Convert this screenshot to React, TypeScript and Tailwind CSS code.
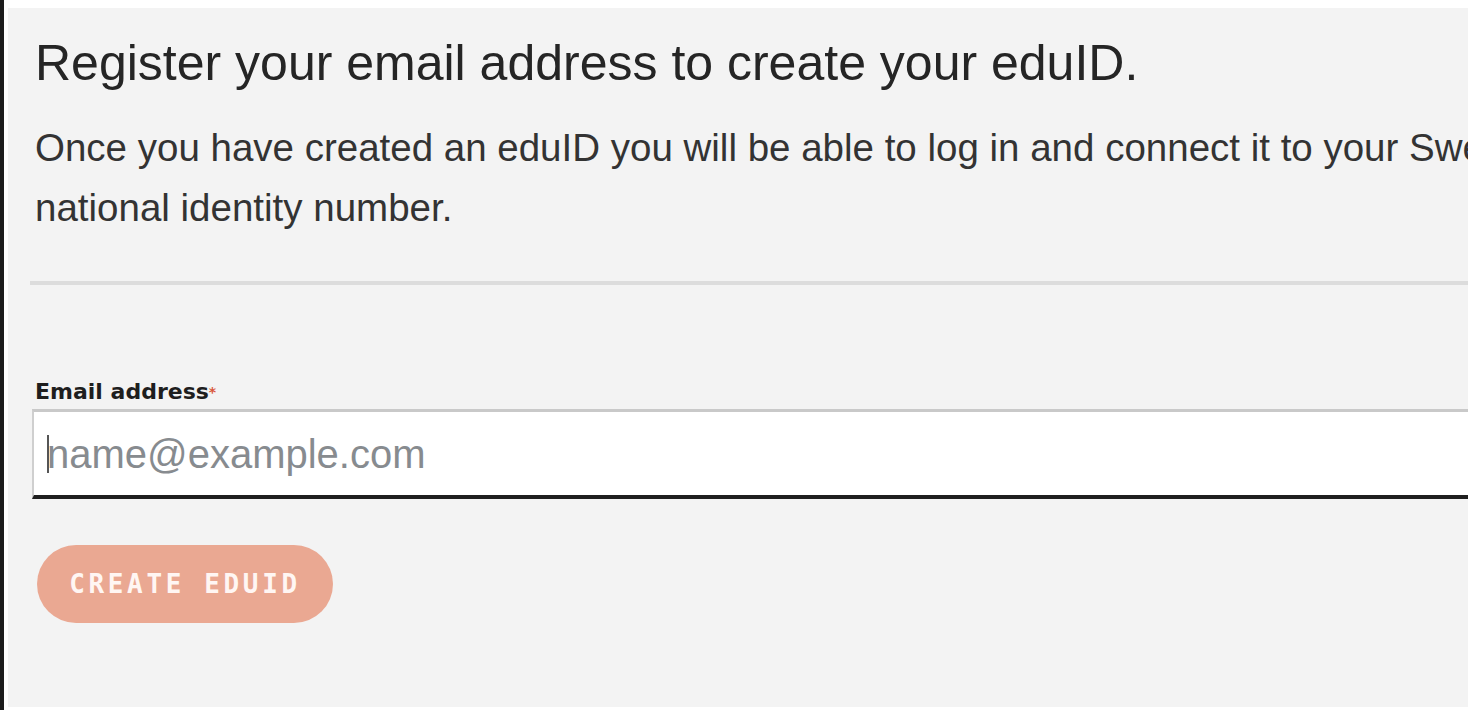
import React from 'react';

const App: React.FC = () => {
    return (
        <div className="w-[1468px] h-[710px] overflow-hidden bg-white flex">
            {/* window edge */}
            <div className="w-[4px] shrink-0 bg-[#1c1c1c]" />
            <div className="w-[4px] shrink-0 bg-white" />

            <div className="flex-1 mt-[8px] mb-[3px] bg-[#f3f3f3] overflow-hidden">
                <div className="w-[1640px] pl-[27px] pt-[25px] font-['Liberation_Sans',Arial,sans-serif]">
                    <h1 className="text-[50px] leading-[60px] text-[#252525] font-normal">
                        Register your email address to create your eduID.
                    </h1>
                    <p className="mt-[25px] w-[1560px] text-[38.5px] leading-[60px] text-[#333]">
                        Once you have created an eduID you will be able to log in and connect it to your Swedish national identity number.
                    </p>

                    <div className="mt-[43px] -ml-[5px] h-[4px] bg-[#dcdcdc]" />

                    {/* Email field */}
                    <label className="block mt-[94px] text-[22px] leading-[26px] font-bold text-[#1e1e1e] font-['DejaVu_Sans',sans-serif]">
                        Email address<span className="text-[#d9573b] text-[14px] align-top">*</span>
                    </label>
                    <div className="mt-[4px] -ml-[3px] h-[90px] bg-white border-t-[3px] border-l-[2px] border-b-[4px] border-t-[#c9c9c9] border-l-[#cfcfcf] border-b-[#1f1f1f] flex items-center pl-[13px]">
                        <span className="w-[2px] h-[38px] bg-[#555] mr-[-2px]" />
                        <input
                            type="email"
                            placeholder="name@example.com"
                            className="flex-1 bg-transparent outline-none text-[40px] text-[#333] placeholder:text-[#878b8f] font-['Liberation_Sans',Arial,sans-serif]"
                        />
                    </div>

                    <button className="mt-[46px] ml-[2px] w-[296px] h-[78px] rounded-full bg-[#eaa892] text-[#fff6f3] text-[26px] font-bold tracking-[0.14em] font-['DejaVu_Sans_Mono',monospace] flex items-center justify-center">
                        CREATE EDUID
                    </button>
                </div>
            </div>
        </div>
    );
};

export default App;
